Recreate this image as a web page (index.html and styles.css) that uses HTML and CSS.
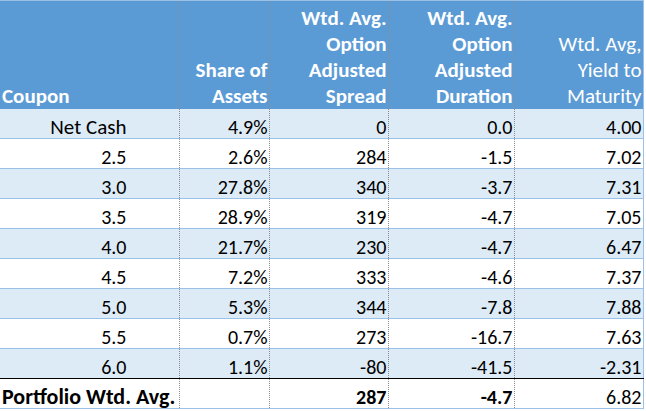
FILE: index.html
```html
<!DOCTYPE html>
<html>
<head>
<meta charset="utf-8">
<link rel="stylesheet" href="styles.css">
</head>
<body>
<table class="grid">
  <colgroup>
    <col class="c1"><col class="c2"><col class="c3"><col class="c4"><col class="c5">
  </colgroup>
  <thead>
    <tr>
      <th class="left">Coupon</th>
      <th>Share of<br>Assets</th>
      <th>Wtd. Avg.<br>Option<br>Adjusted<br>Spread</th>
      <th>Wtd. Avg.<br>Option<br>Adjusted<br>Duration</th>
      <th class="normal">Wtd. Avg,<br>Yield to<br>Maturity</th>
    </tr>
  </thead>
  <tbody>
    <tr class="band"><td class="coupon label">Net Cash</td><td>4.9%</td><td>0</td><td>0.0</td><td>4.00</td></tr>
    <tr><td class="coupon">2.5</td><td>2.6%</td><td>284</td><td>-1.5</td><td>7.02</td></tr>
    <tr class="band"><td class="coupon">3.0</td><td>27.8%</td><td>340</td><td>-3.7</td><td>7.31</td></tr>
    <tr><td class="coupon">3.5</td><td>28.9%</td><td>319</td><td>-4.7</td><td>7.05</td></tr>
    <tr class="band"><td class="coupon">4.0</td><td>21.7%</td><td>230</td><td>-4.7</td><td>6.47</td></tr>
    <tr><td class="coupon">4.5</td><td>7.2%</td><td>333</td><td>-4.6</td><td>7.37</td></tr>
    <tr class="band"><td class="coupon">5.0</td><td>5.3%</td><td>344</td><td>-7.8</td><td>7.88</td></tr>
    <tr><td class="coupon">5.5</td><td>0.7%</td><td>273</td><td>-16.7</td><td>7.63</td></tr>
    <tr class="band"><td class="coupon">6.0</td><td>1.1%</td><td>-80</td><td>-41.5</td><td>-2.31</td></tr>
    <tr class="total"><td class="left bold summary">Portfolio Wtd. Avg.</td><td></td><td class="bold">287</td><td class="bold">-4.7</td><td>6.82</td></tr>
  </tbody>
</table>
</body>
</html>
```

FILE: styles.css
```css
html, body {
  margin: 0;
  padding: 0;
  background: #ffffff;
}

.grid {
  border-collapse: collapse;
  table-layout: fixed;
  width: 643px;
  font-family: "Carlito", "Lato", "Liberation Sans", sans-serif;
  font-size: 20px;
  color: #000000;
  border-top: 1px solid #9bc2e6;
  border-right: 1px solid #9bc2e6;
}

.c1 { width: 179px; }
.c2 { width: 90px; }
.c3 { width: 119px; }
.c4 { width: 126px; }
.c5 { width: 129px; }

.grid th,
.grid td {
  padding: 0 1px 0 2px;
  text-align: right;
  vertical-align: bottom;
  white-space: nowrap;
  overflow: visible;
}

.grid th + th,
.grid td + td {
  border-left: 1px dotted #8c8c8c;
}

.grid thead tr {
  height: 108px;
  background: #5b9bd5;
}

.grid th {
  color: #ffffff;
  font-size: 21px;
  font-weight: bold;
  line-height: 26px;
}

.grid th.normal {
  font-weight: normal;
}

.grid .left {
  text-align: left;
}

.grid tbody tr {
  height: 30px;
  border-bottom: 1px solid #9bc2e6;
}

.grid td {
  line-height: 22px;
}

.grid td.label {
  font-size: 21px;
}

.grid td.summary {
  font-size: 22px;
}

.grid tbody tr.band {
  background: #ddebf7;
}

.grid td.coupon {
  padding-right: 52px;
}

.grid tr.total td {
  border-top: 1px solid #000000;
}

.grid .bold {
  font-weight: bold;
}
```
